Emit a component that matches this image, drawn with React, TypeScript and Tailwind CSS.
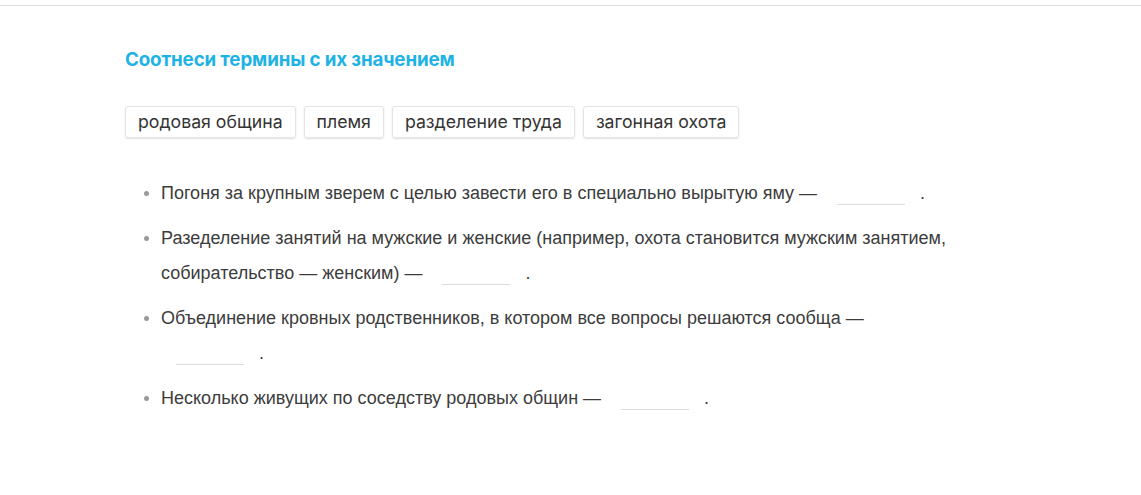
import React from "react";

const Blank = ({ first = false }: { first?: boolean }) => (
  <span
    className={
      first
        ? "inline-block w-[68px] h-[1px] bg-[#dcdcdc] align-[-6px] ml-[15px] mr-[15px]"
        : "inline-block w-[68px] h-[1px] bg-[#dcdcdc] align-[-6px] ml-[20px] mr-[15px]"
    }
  />
);

const items: React.ReactNode[] = [
  <>Погоня за крупным зверем с целью завести его в специально вырытую яму —<Blank />.</>,
  <>Разеделение занятий на мужские и женские (например, охота становится мужским занятием, собирательство — женским) —<Blank />.</>,
  <>Объединение кровных родственников, в котором все вопросы решаются сообща —<br /><Blank first />.</>,
  <>Несколько живущих по соседству родовых общин —<Blank />.</>,
];

const terms = ["родовая община", "племя", "разделение труда", "загонная охота"];

export default function App() {
  return (
    <div className="w-[1141px] h-[495px] bg-white overflow-hidden">
      <div className="mt-[5px] h-[1px] bg-[#dddddd]" />
      <div className="pl-[125px] pt-[43px]">
        <h2 className="text-[18.8px] leading-[22px] font-bold text-[#1fb3e5] tracking-[-0.15px] [font-family:Inter,'Noto_Sans',sans-serif]">
          Соотнеси термины с их значением
        </h2>
        <div className="flex gap-2 mt-[35px]">
          {terms.map((t) => (
            <div
              key={t}
              className="h-[32px] px-3 flex items-center rounded-[3px] border border-[#e4e4e4] shadow-[0_1px_2px_rgba(0,0,0,0.12)] text-[17.7px] text-[#333] [font-family:Inter,'Noto_Sans',sans-serif]"
            >
              {t}
            </div>
          ))}
        </div>
        <ul className="mt-[38px] pl-[36px] w-[830px] text-[18px] leading-[35px] text-[#3c3c3c] [font-family:'Liberation_Sans',Arial,sans-serif]">
          {items.map((it, i) => (
            <li key={i} className="relative mb-[10px]">
              <span className="absolute left-[-17px] top-[15px] w-[5px] h-[5px] rounded-full bg-[#9a9a9a]" />
              {it}
            </li>
          ))}
        </ul>
      </div>
    </div>
  );
}
